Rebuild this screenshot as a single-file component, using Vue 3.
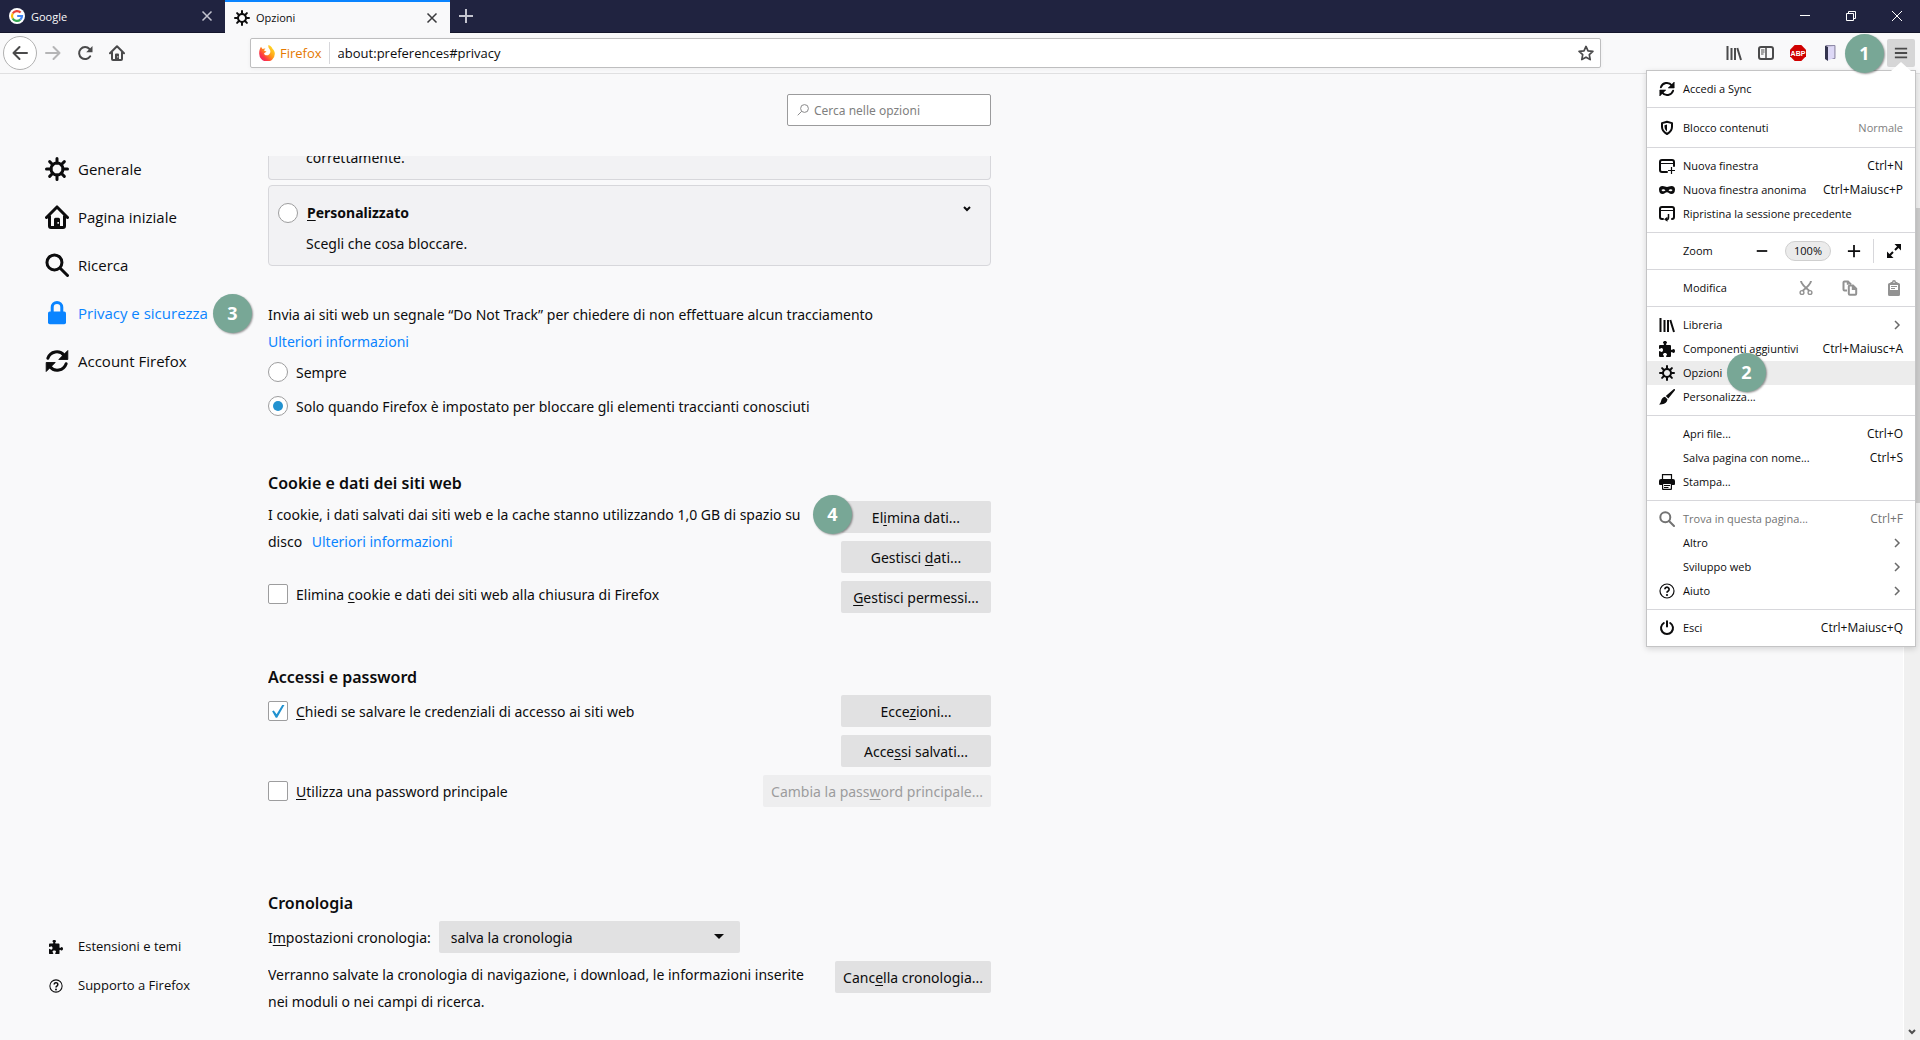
<script setup>
import { ref } from 'vue'

const tracking = ref('known')
const category = ref('')
const clearOnClose = ref(false)
const askSave = ref(true)
const mainPassword = ref(false)
const history = ref('save')
const search = ref('')
const address = ref('about:preferences#privacy')

const nav = [
  { icon: 'gear', label: 'Generale' },
  { icon: 'home', label: 'Pagina iniziale' },
  { icon: 'search', label: 'Ricerca' },
  { icon: 'lock', label: 'Privacy e sicurezza', active: true, step: 3 },
  { icon: 'sync', label: 'Account Firefox' },
]

const navFooter = [
  { icon: 'puzzle', label: 'Estensioni e temi' },
  { icon: 'help', label: 'Supporto a Firefox' },
]

const menu = [
  [{ icon: 'sync', label: 'Accedi a Sync' }],
  [{ icon: 'shield', label: 'Blocco contenuti', hint: 'Normale', tall: true }],
  [
    { icon: 'window-new', label: 'Nuova finestra', hint: 'Ctrl+N' },
    { icon: 'mask', label: 'Nuova finestra anonima', hint: 'Ctrl+Maiusc+P' },
    { icon: 'window-restore', label: 'Ripristina la sessione precedente' },
  ],
  [{ label: 'Zoom', kind: 'zoom' }],
  [{ label: 'Modifica', kind: 'edit' }],
  [
    { icon: 'library', label: 'Libreria', more: true },
    { icon: 'puzzle', label: 'Componenti aggiuntivi', hint: 'Ctrl+Maiusc+A' },
    { icon: 'gear', label: 'Opzioni', active: true, step: 2 },
    { icon: 'brush', label: 'Personalizza...' },
  ],
  [
    { label: 'Apri file...', hint: 'Ctrl+O' },
    { label: 'Salva pagina con nome...', hint: 'Ctrl+S' },
    { icon: 'print', label: 'Stampa...' },
  ],
  [
    { icon: 'search', label: 'Trova in questa pagina...', hint: 'Ctrl+F', disabled: true },
    { label: 'Altro', more: true },
    { label: 'Sviluppo web', more: true },
    { icon: 'help', label: 'Aiuto', more: true },
  ],
  [{ icon: 'power', label: 'Esci', hint: 'Ctrl+Maiusc+Q' }],
]
</script>

<template>
  <div class="browser">
    <svg class="sprite" aria-hidden="true">
      <symbol id="gear" viewBox="0 0 16 16">
        <circle cx="8" cy="8" r="4" fill="none" stroke="currentColor" stroke-width="2" />
        <path d="M8 4V1M8 12v3M4 8H1M12 8h3M5.2 5.2L3.1 3.1M10.8 10.8l2.1 2.1M5.2 10.8l-2.1 2.1M10.8 5.2l2.1-2.1" fill="none" stroke="currentColor" stroke-width="2" stroke-linecap="round" />
      </symbol>
      <symbol id="home" viewBox="0 0 16 16">
        <path d="M1 8.3L8 1.3l7 7M3 7.5V14a1 1 0 0 0 1 1h8a1 1 0 0 0 1-1V7.500" fill="none" stroke="currentColor" stroke-width="2" stroke-linecap="round" stroke-linejoin="round" />
        <path fill-rule="evenodd" d="M6 15V9.500a1 1 0 0 1 1-1h2a1 1 0 0 1 1 1V15zM8.300 11.300v1.200h1v-1.200z" fill="currentColor" />
      </symbol>
      <symbol id="search" viewBox="0 0 16 16">
        <circle cx="6.300" cy="6.300" r="5" fill="none" stroke="currentColor" stroke-width="2" />
        <path d="M10 10l5 5" stroke="currentColor" stroke-width="2" stroke-linecap="round" />
      </symbol>
      <symbol id="search-thin" viewBox="0 0 12 12">
        <circle cx="7.500" cy="4.500" r="3.900" fill="none" stroke="currentColor" />
        <path d="M4.700 7.300L.7 11.300" stroke="currentColor" />
      </symbol>
      <symbol id="lock" viewBox="0 0 16 16">
        <path d="M4.800 8V4.200a3.200 3.200 0 0 1 6.400 0V8" fill="none" stroke="currentColor" stroke-width="2" />
        <rect x="2" y="7" width="12" height="8.500" rx="1.200" fill="currentColor" />
      </symbol>
      <symbol id="sync" viewBox="0 0 16 16">
        <path d="M1.900 6.200A6.300 6.300 0 0 1 12.800 4.300M14.100 9.800A6.300 6.300 0 0 1 3.200 11.700" fill="none" stroke="currentColor" stroke-width="2" stroke-linecap="round" />
        <path d="M15.200 1v6H9.200zM.8 15V9h6z" fill="currentColor" stroke="currentColor" stroke-width=".6" stroke-linejoin="round" />
      </symbol>
      <symbol id="puzzle" viewBox="0 0 16 16">
        <path fill="currentColor" d="M14.500 8c-.971 0-1 1-1.750 1a.765.765 0 0 1-.75-.75V5a1 1 0 0 0-1-1H7.750A.765.765 0 0 1 7 3.250c0-.75 1-.779 1-1.750C8 .635 7.100 0 6 0S4 .635 4 1.500c0 .971 1 1 1 1.750a.765.765 0 0 1-.75.75H1a1 1 0 0 0-1 1v2.250A.765.765 0 0 0 .75 8c.75 0 .779-1 1.750-1C3.365 7 4 7.900 4 9s-.635 2-1.500 2c-.971 0-1-1-1.750-1a.765.765 0 0 0-.75.75V15a1 1 0 0 0 1 1h3.250a.765.765 0 0 0 .75-.75c0-.75-1-.779-1-1.750 0-.865.9-1.500 2-1.500s2 .635 2 1.500c0 .971-1 1-1 1.750a.765.765 0 0 0 .75.75H11a1 1 0 0 0 1-1v-3.250a.765.765 0 0 1 .75-.75c.75 0 .779 1 1.750 1 .865 0 1.500-.9 1.500-2s-.635-2-1.500-2z" />
      </symbol>
      <symbol id="help" viewBox="0 0 16 16">
        <circle cx="8" cy="8" r="7" fill="none" stroke="currentColor" stroke-width="1.200" />
        <path d="M5.900 6.300a2.100 2.100 0 1 1 3.300 1.700Q8 8.700 8 9.800" fill="none" stroke="currentColor" stroke-width="1.700" />
        <circle cx="8" cy="12" r="1.100" fill="currentColor" />
      </symbol>
      <symbol id="shield" viewBox="0 0 16 16">
        <path d="M8 1.800l5 1.300v3.700c0 3-2 5.700-5 7.200-3-1.500-5-4.200-5-7.200V3.100z" fill="none" stroke="currentColor" stroke-width="2" stroke-linejoin="round" />
        <path d="M8 4.500v7c-1.400-1.100-2.500-2.700-2.500-4.700V5.200z" fill="currentColor" />
      </symbol>
      <symbol id="window-new" viewBox="0 0 16 16">
        <path d="M8 14H3a2 2 0 0 1-2-2V4a2 2 0 0 1 2-2h10a2 2 0 0 1 2 2v4" fill="none" stroke="currentColor" stroke-width="2" stroke-linecap="round" />
        <path d="M1 5.500h14" stroke="currentColor" stroke-width="1" />
        <path d="M12.500 9v7M9 12.500h7" stroke="currentColor" stroke-width="1.200" />
      </symbol>
      <symbol id="window-restore" viewBox="0 0 16 16">
        <path d="M4 13H3a2 2 0 0 1-2-2V3a2 2 0 0 1 2-2h10a2 2 0 0 1 2 2v8a2 2 0 0 1-2 2" fill="none" stroke="currentColor" stroke-width="2" stroke-linecap="round" />
        <path d="M1 4.500h14" stroke="currentColor" stroke-width="1" />
        <path d="M9.500 8v4c0 1-.5 1.500-1.500 1.500H6.500" fill="none" stroke="currentColor" stroke-width="1.500" />
        <path d="M8.500 10.800v5l-3.500-2.500z" fill="currentColor" />
      </symbol>
      <symbol id="mask" viewBox="0 0 16 16">
        <path fill-rule="evenodd" fill="currentColor" d="M3.500 4C1.200 4 0 5.200 0 7.500 0 10.500 1.500 12 3.500 12c2.300 0 3-1.700 4.500-1.700S10.200 12 12.500 12c2 0 3.500-1.500 3.500-4.500C16 5.200 14.800 4 12.500 4 10.300 4 9.500 5 8 5S5.700 4 3.500 4zM2.500 8C3 6.800 5.500 6.800 6.500 8.300 5.500 9.600 3 9.600 2.500 8zM13.500 8C13 6.800 10.500 6.800 9.500 8.300c1 1.300 3.500 1.300 4-.3z" />
      </symbol>
      <symbol id="library" viewBox="0 0 16 16">
        <path d="M1.500 1v14M5.500 3v12M9 3v12M11.300 3l3.700 12" fill="none" stroke="currentColor" stroke-width="2" />
      </symbol>
      <symbol id="brush" viewBox="0 0 16 16">
        <path d="M15.800.2c.3.300.3.700 0 1.200L9.300 9.500 6.800 7l7.800-6.700c.4-.3.900-.4 1.200-.1zM6 7.700L8.500 10.200c-.2 3-2.500 4.600-5.500 5-1 .2-2 .3-3 .3 1.200-.8 1.600-1.700 2-3.200C2.500 9.800 3.800 7.900 6 7.700z" fill="currentColor" />
      </symbol>
      <symbol id="print" viewBox="0 0 16 16">
        <path d="M3.500 6V.6h9V6" fill="none" stroke="currentColor" stroke-width="1.200" />
        <path d="M2 5h12a2 2 0 0 1 2 2v3a1 1 0 0 1-1 1h-2v4a1 1 0 0 1-1 1H4a1 1 0 0 1-1-1v-4H1a1 1 0 0 1-1-1V7a2 2 0 0 1 2-2zm2.200 5v4.800h7.600V10z" fill="currentColor" fill-rule="evenodd" />
        <path d="M5 11.500h6M5 13.500h4.500" stroke="currentColor" stroke-width="1" />
      </symbol>
      <symbol id="power" viewBox="0 0 16 16">
        <path d="M4.800 3A6 6 0 1 0 11.200 3M8 1.200v5.300" fill="none" stroke="currentColor" stroke-width="2" stroke-linecap="round" />
      </symbol>
      <symbol id="chevron" viewBox="0 0 8 10">
        <path d="M2 1l4 4-4 4" fill="none" stroke="currentColor" stroke-width="1.500" />
      </symbol>
      <symbol id="cut" viewBox="0 0 16 16">
        <path d="M3 1c.3 3 3 5.500 8.500 10M13 1c-.3 3-3 5.500-8.500 10" fill="none" stroke="currentColor" stroke-width="2" />
        <circle cx="4" cy="12.500" r="1.900" fill="none" stroke="currentColor" stroke-width="1.400" />
        <circle cx="12" cy="12.500" r="1.900" fill="none" stroke="currentColor" stroke-width="1.400" />
      </symbol>
      <symbol id="copy" viewBox="0 0 16 16">
        <path d="M5 10.500H2.500a1 1 0 0 1-1-1v-7a1 1 0 0 1 1-1H6L9 4.500" fill="none" stroke="currentColor" stroke-width="2" />
        <path d="M6.800 6.500a1 1 0 0 1 1-1H11l3.200 3.200v5a1 1 0 0 1-1 1H7.800a1 1 0 0 1-1-1zM10.800 5.500V9h3.400M5.800 1.500v3.300" fill="none" stroke="currentColor" stroke-width="2" />
      </symbol>
      <symbol id="paste" viewBox="0 0 16 16">
        <path fill="currentColor" fill-rule="evenodd" d="M5 2h1a2 2 0 0 1 4 0h1l1 1h.5A1.500 1.500 0 0 1 14 4.500v10a1.500 1.500 0 0 1-1.500 1.500h-9A1.500 1.500 0 0 1 2 14.500v-10A1.500 1.500 0 0 1 3.500 3H4zm-1 3v5h8V5zM7.300 1.800v1h1.400v-1z" />
        <path d="M5 6.500h6M5 8.500h4" stroke="currentColor" />
      </symbol>
      <symbol id="fullscreen" viewBox="0 0 16 16">
        <path d="M9 7l5-5M7 9l-5 5" stroke="currentColor" stroke-width="2" />
        <path d="M8.500 1H15v6.500zM1 8.500V15h6.500z" fill="currentColor" />
      </symbol>
      <symbol id="plus" viewBox="0 0 16 16">
        <path d="M8 1v14M1 8h14" stroke="currentColor" stroke-width="2" />
      </symbol>
      <symbol id="minus" viewBox="0 0 16 16">
        <path d="M2 8h12" stroke="currentColor" stroke-width="2" />
      </symbol>
      <symbol id="close" viewBox="0 0 16 16">
        <path d="M3.500 3.500l9 9M12.500 3.500l-9 9" stroke="currentColor" stroke-width="1.500" />
      </symbol>
      <symbol id="arrow" viewBox="0 0 16 16">
        <path d="M15 8H1.500M7.500 2l-6 6 6 6" fill="none" stroke="currentColor" stroke-width="2" stroke-linecap="round" stroke-linejoin="round" />
      </symbol>
      <symbol id="reload" viewBox="0 0 16 16">
        <path d="M13.200 11.300A6 6 0 1 1 12.500 4" fill="none" stroke="currentColor" stroke-width="2" stroke-linecap="round" />
        <path d="M15.500 1v6.300H9.200z" fill="currentColor" />
      </symbol>
      <symbol id="star" viewBox="0 0 16 16">
        <path d="M8 1.400l2 4.400 4.900.6-3.600 3.300.9 4.900L8 12.200l-4.200 2.400.9-4.900L1.100 6.400 6 5.800z" fill="none" stroke="currentColor" stroke-width="1.700" stroke-linejoin="round" />
      </symbol>
      <symbol id="sidebar" viewBox="0 0 16 16">
        <rect x="1" y="2" width="14" height="12" rx="2" fill="none" stroke="currentColor" stroke-width="2" />
        <path d="M8 2v12" stroke="currentColor" stroke-width="1.500" />
        <path d="M3 5h3.500M3 7h3.500M3 9h2.500" stroke="currentColor" />
      </symbol>
      <symbol id="lines" viewBox="0 0 16 16">
        <path d="M1 3h14M1 8h14M1 13h14" stroke="currentColor" stroke-width="2.200" />
      </symbol>
      <symbol id="down" viewBox="0 0 8 6">
        <path d="M1 1l3 3 3-3" fill="none" stroke="currentColor" stroke-width="2" />
      </symbol>
    </svg>

    <header class="tabs">
      <div class="tab">
        <svg class="i16" viewBox="0 0 16 16" aria-hidden="true">
          <circle cx="8" cy="8" r="8" fill="#fff" />
          <g fill="none" stroke-width="2.200">
            <path d="M11.600 4.600A5 5 0 0 0 3.700 5.500" stroke="#ea4335" />
            <path d="M3.700 5.500a5 5 0 0 0 0 5" stroke="#fbbc05" />
            <path d="M3.700 10.500a5 5 0 0 0 7.600 1.200" stroke="#34a853" />
            <path d="M11.300 11.700A5 5 0 0 0 13 8H8.200" stroke="#4285f4" />
          </g>
        </svg>
        <span class="tab-title">Google</span>
        <button class="bare" aria-label="Chiudi scheda Google"><svg class="i16"><use href="#close" /></svg></button>
      </div>
      <div class="tab current">
        <svg class="i16"><use href="#gear" /></svg>
        <span class="tab-title">Opzioni</span>
        <button class="bare" aria-label="Chiudi scheda Opzioni"><svg class="i16"><use href="#close" /></svg></button>
      </div>
      <button class="bare new-tab" aria-label="Nuova scheda"><svg class="i16"><use href="#plus" /></svg></button>
      <div class="window-controls">
        <button class="bare" aria-label="Riduci a icona"><svg class="i10" viewBox="0 0 10 10"><path d="M0 4.500h10" stroke="currentColor" /></svg></button>
        <button class="bare" aria-label="Ripristina"><svg class="i10" viewBox="0 0 10 10"><path d="M.5 2.500h7v7h-7zM2.500 2.500v-2h7v7h-2" fill="none" stroke="currentColor" /></svg></button>
        <button class="bare" aria-label="Chiudi"><svg class="i10" viewBox="0 0 10 10"><path d="M0 0l10 10M10 0L0 10" stroke="currentColor" /></svg></button>
      </div>
    </header>

    <div class="toolbar">
      <div class="nav-buttons">
        <button class="bare back" aria-label="Indietro"><svg class="i16"><use href="#arrow" /></svg></button>
        <button class="bare tool forward" aria-label="Avanti"><svg class="i16"><use href="#arrow" /></svg></button>
        <button class="bare tool" aria-label="Ricarica"><svg class="i16"><use href="#reload" /></svg></button>
        <button class="bare tool" aria-label="Pagina iniziale"><svg class="i16"><use href="#home" /></svg></button>
      </div>
      <div class="address">
        <svg class="i16" viewBox="0 0 16 16" aria-hidden="true">
          <defs>
            <linearGradient id="flame" x1="1" y1="0" x2="0" y2="1">
              <stop offset="0.100" stop-color="#ffe226" />
              <stop offset="0.450" stop-color="#ff9a1a" />
              <stop offset="0.700" stop-color="#ff3b3f" />
              <stop offset="1" stop-color="#e0108a" />
            </linearGradient>
          </defs>
          <path d="M9.500 0c2.500 1 3.500 2.500 4 3.700C15 5 16 7 15.800 9a7.800 7.800 0 0 1-15.600-.5C.1 5.500 1 3.500 2 1.800L3.500 4c1-.6 2-.7 3-.5C5.500 4.300 5 5 5.300 5.800L7.500 6.500C7 7.500 5.500 7.500 5 8.500c.5 2 3.500 2.500 5 1 1.800-1.500 1.800-4 .5-5.500C9.500 3 9 1.500 9.500 0z" fill="url(#flame)" />
        </svg>
        <span class="identity">Firefox</span>
        <input v-model="address" class="url" type="text" aria-label="Indirizzo" />
        <button class="bare star" aria-label="Aggiungi ai segnalibri"><svg class="i16"><use href="#star" /></svg></button>
      </div>
      <div class="tools">
        <button class="bare tool" aria-label="Libreria"><svg class="i16"><use href="#library" /></svg></button>
        <button class="bare tool" aria-label="Barre laterali"><svg class="i16"><use href="#sidebar" /></svg></button>
        <button class="bare tool" aria-label="Adblock Plus">
          <svg class="i16" viewBox="0 0 16 16">
            <path d="M4.700 0h6.600L16 4.700v6.600L11.300 16H4.700L0 11.300V4.700z" fill="#d00000" />
            <text x="8" y="10.500" text-anchor="middle" class="abp">ABP</text>
          </svg>
        </button>
        <button class="bare tool" aria-label="Estensione">
          <svg class="i16" viewBox="0 0 16 16">
            <path d="M4 .5h9v13H8" fill="#c9c4dc" stroke="#8f8aa8" />
            <path d="M3 .5l3 1.500v14l-3-2z" fill="#34354f" />
            <path d="M6 2.500L12 1v12l-6 2.500z" fill="#ddd8f6" />
          </svg>
        </button>
        <span class="step step-menu">1</span>
        <button class="bare menu-button" aria-label="Apri menu"><svg class="i14"><use href="#lines" /></svg></button>
      </div>

      <div class="menu" role="menu">
        <svg class="pointer" viewBox="0 0 20 10"><path d="M0 10L10 1l10 9" /></svg>
        <div v-for="(group, g) in menu" :key="g" class="group">
          <template v-for="item in group" :key="item.label">
            <div v-if="item.kind" class="item">
              <span class="item-label">{{ item.label }}</span>
              <template v-if="item.kind === 'zoom'">
                <button class="bare zoom-button" aria-label="Riduci"><svg class="i14"><use href="#minus" /></svg></button>
                <button class="bare zoom-level">100%</button>
                <button class="bare zoom-button" aria-label="Ingrandisci"><svg class="i14"><use href="#plus" /></svg></button>
                <button class="bare full" aria-label="Schermo intero"><svg class="i16"><use href="#fullscreen" /></svg></button>
              </template>
              <template v-else>
                <button v-for="e in ['cut', 'copy', 'paste']" :key="e" class="bare edit" :aria-label="e" disabled>
                  <svg class="i16"><use :href="'#' + e" /></svg>
                </button>
              </template>
            </div>
            <button v-else class="bare item" :class="{ active: item.active, tall: item.tall }" :disabled="item.disabled" role="menuitem">
              <svg v-if="item.icon" class="i16 item-icon"><use :href="'#' + item.icon" /></svg>
              <span class="item-label">{{ item.label }}<span v-if="item.step" class="step step-item">{{ item.step }}</span></span>
              <span v-if="item.hint" class="hint" :class="{ dim: item.tall }">{{ item.hint }}</span>
              <svg v-if="item.more" class="more"><use href="#chevron" /></svg>
            </button>
          </template>
        </div>
      </div>
    </div>

    <div class="page">
      <nav class="sidebar">
        <a v-for="n in nav" :key="n.label" href="#" class="nav-item" :class="{ selected: n.active }">
          <svg class="i24"><use :href="'#' + n.icon" /></svg>
          <span class="nav-label">{{ n.label }}<span v-if="n.step" class="step step-nav">{{ n.step }}</span></span>
        </a>
        <div class="nav-footer">
          <a v-for="n in navFooter" :key="n.label" href="#" class="nav-small">
            <svg class="i14"><use :href="'#' + n.icon" /></svg>{{ n.label }}
          </a>
        </div>
      </nav>

      <main class="content">
        <div class="search-row">
          <label class="search-box">
            <svg class="i12"><use href="#search-thin" /></svg>
            <input v-model="search" type="text" placeholder="Cerca nelle opzioni" aria-label="Cerca nelle opzioni" />
          </label>
        </div>

        <div class="scroll">
          <div class="card clipped"><p class="card-text">correttamente.</p></div>
          <div class="card">
            <label class="card-head">
              <input v-model="category" type="radio" name="category" value="custom" />
              <b><u>P</u>ersonalizzato</b>
              <svg class="down"><use href="#down" /></svg>
            </label>
            <p class="card-text">Scegli che cosa bloccare.</p>
          </div>

          <section class="tracking">
            <p>Invia ai siti web un segnale “Do Not Track” per chiedere di non effettuare alcun tracciamento</p>
            <p><a href="#">Ulteriori informazioni</a></p>
            <label class="option"><input v-model="tracking" type="radio" name="dnt" value="always" />Sempre</label>
            <label class="option"><input v-model="tracking" type="radio" name="dnt" value="known" />Solo quando Firefox è impostato per bloccare gli elementi traccianti conosciuti</label>
          </section>

          <section class="cookies">
            <h2>Cookie e dati dei siti web</h2>
            <div class="columns">
              <div class="text">
                <p>I cookie, i dati salvati dai siti web e la cache stanno utilizzando 1,0 GB di spazio su disco <a class="spaced" href="#">Ulteriori informazioni</a></p>
                <label class="option after-text"><input v-model="clearOnClose" type="checkbox" /><span>Elimina <u>c</u>ookie e dati dei siti web alla chiusura di Firefox</span></label>
              </div>
              <div class="buttons">
                <button class="push">El<u>i</u>mina dati...</button>
                <button class="push">Gestisci <u>d</u>ati...</button>
                <button class="push"><u>G</u>estisci permessi...</button>
                <span class="step step-clear">4</span>
              </div>
            </div>
          </section>

          <section class="logins">
            <h2>Accessi e password</h2>
            <div class="stack">
              <div class="line">
                <label class="option"><input v-model="askSave" type="checkbox" /><span><u>C</u>hiedi se salvare le credenziali di accesso ai siti web</span></label>
                <button class="push">Ecce<u>z</u>ioni...</button>
              </div>
              <div class="line end"><button class="push">Acce<u>s</u>si salvati...</button></div>
              <div class="line">
                <label class="option"><input v-model="mainPassword" type="checkbox" /><span><u>U</u>tilizza una password principale</span></label>
                <button class="push" disabled>Cambia la pass<u>w</u>ord principale...</button>
              </div>
            </div>
          </section>

          <section class="history">
            <h2>Cronologia</h2>
            <div class="stack">
              <div class="setting">
                <label for="history-mode">I<u>m</u>postazioni cronologia:</label>
                <span class="select">
                  <select id="history-mode" v-model="history">
                    <option value="save">salva la cronologia</option>
                    <option value="never">non salvare la cronologia</option>
                    <option value="custom">utilizza impostazioni personalizzate</option>
                  </select>
                  <svg viewBox="0 0 10 6"><path d="M0 0h10L5 5z" fill="currentColor" /></svg>
                </span>
              </div>
              <div class="columns">
                <p class="text">Verranno salvate la cronologia di navigazione, i download, le informazioni inserite nei moduli o nei campi di ricerca.</p>
                <button class="push">Canc<u>e</u>lla cronologia...</button>
              </div>
            </div>
          </section>
        </div>
      </main>

      <div class="scrollbar" aria-hidden="true">
        <div class="thumb"></div>
        <svg class="down"><use href="#down" /></svg>
      </div>
    </div>
  </div>
</template>

<style>
body {
  margin: 0;
}
</style>

<style scoped>
* {
  box-sizing: border-box;
}
.browser {
  display: flex;
  flex-direction: column;
  height: 100vh;
  overflow: hidden;
  background: #f9f9fa;
  color: #0c0c0d;
  font: 14px/27px "Open Sans", "Noto Sans", sans-serif;
}
.sprite {
  position: absolute;
  width: 0;
  height: 0;
}
svg {
  display: block;
  flex: none;
}
.i10 { width: 10px; height: 10px; }
.i12 { width: 12px; height: 12px; }
.i14 { width: 14px; height: 14px; }
.i16 { width: 16px; height: 16px; }
.i24 { width: 24px; height: 24px; }
p,
h2 {
  margin: 0;
}
a {
  color: #0a84ff;
  text-decoration: none;
}
u {
  text-underline-offset: 2px;
}
.bare {
  display: flex;
  align-items: center;
  justify-content: center;
  padding: 0;
  border: 0;
  background: none;
  color: inherit;
  font: inherit;
}

/* Tab strip */
.tabs {
  display: flex;
  height: 33px;
  flex: none;
  background: #202340;
  border-bottom: 1px solid #14162c;
  color: #c3c4cf;
  font-size: 11px;
}
.tab {
  display: flex;
  align-items: center;
  width: 225px;
  padding: 0 10px 0 9px;
}
.tab-title {
  flex: 1;
  padding-left: 6px;
  color: #f9f9fa;
}
.tab.current {
  height: 33px;
  background: #f9f9fa;
  border-top: 2px solid #0a84ff;
  color: #3a3a3c;
}
.tab.current > .i16,
.current .tab-title {
  color: #0c0c0d;
}
.new-tab {
  width: 32px;
}
.window-controls {
  display: flex;
  margin-left: auto;
  color: #fff;
}
.window-controls .bare {
  width: 46px;
}

/* Toolbar */
.toolbar {
  position: relative;
  z-index: 2;
  display: flex;
  align-items: center;
  height: 41px;
  flex: none;
  padding: 0 5px 0 3px;
  border-bottom: 1px solid #e0e0e1;
  color: #4a4a4b;
}
.nav-buttons,
.tools {
  display: flex;
  align-items: center;
}
.nav-buttons {
  margin-right: 117px;
}
.back {
  width: 34px;
  height: 34px;
  border: 1px solid #b1b1b1;
  border-radius: 50%;
  background: #fff;
}
.tool {
  width: 32px;
  height: 32px;
}
.forward {
  color: #b5b5b6;
}
.forward svg {
  transform: scaleX(-1);
}
.address {
  display: flex;
  flex: 1;
  align-items: center;
  height: 30px;
  padding: 0 6px 0 8px;
  border: 1px solid #bebebf;
  border-radius: 2px;
  background: #fff;
  box-shadow: 0 1px 4px rgba(0, 0, 0, 0.050);
  font-size: 13px;
}
.identity {
  height: 22px;
  padding: 0 7px 0 5px;
  border-right: 1px solid #d7d7db;
  color: #e57900;
  font-size: 13px;
  line-height: 22px;
}
.url {
  flex: 1;
  min-width: 0;
  padding: 0 0 0 8px;
  border: 0;
  outline: 0;
  background: none;
  color: #0c0c0d;
  font: inherit;
}
.tools {
  margin-left: 117px;
  position: relative;
}
.abp {
  fill: #fff;
  font: bold 7px "Liberation Sans", sans-serif;
}
.menu-button {
  width: 28px;
  height: 28px;
  margin-left: 41px;
  border-radius: 2px;
  background: #d6d6d7;
}

/* Numbered callouts */
.step {
  position: absolute;
  z-index: 3;
  width: 39px;
  height: 39px;
  border-radius: 50%;
  background: #78a796;
  box-shadow: 1px 1px 2px rgba(0, 0, 0, 0.400);
  color: #fff;
  font: bold 18px/38px "Open Sans", sans-serif;
  text-align: center;
}
.step-menu {
  right: 31px;
}
.step-item {
  top: -8px;
  left: 80px;
}
.step-nav {
  top: -6px;
  left: 135px;
}
.step-clear {
  top: -6px;
  left: -28px;
}

/* Application menu */
.menu {
  position: absolute;
  top: 37px;
  right: 4px;
  width: 270px;
  border: 1px solid #c4c4c5;
  background: #fff;
  box-shadow: 0 2px 6px rgba(0, 0, 0, 0.150);
  color: #0c0c0d;
  font-size: 11px;
  line-height: 24px;
}
.pointer {
  position: absolute;
  top: -10px;
  right: 4px;
  width: 20px;
  height: 10px;
  fill: #fff;
}
.group {
  padding: 6px 0;
}
.group + .group {
  border-top: 1px solid #d7d7db;
}
.item {
  position: relative;
  display: flex;
  align-items: center;
  justify-content: flex-start;
  width: 100%;
  height: 24px;
  padding: 0 12px 0 36px;
}
.item.tall {
  height: 27px;
}
.item.active {
  background: #ececec;
}
.item:disabled {
  color: #737373;
}
.item-icon {
  margin: 0 8px 0 -24px;
}
.item-label {
  flex: 1;
  text-align: left;
  white-space: nowrap;
}
.hint {
  font-size: 12px;
}
.dim {
  color: #808080;
  font-size: 11px;
}
.more {
  width: 8px;
  height: 10px;
  margin-right: 2px;
  color: #6a6a6a;
}
.zoom-button {
  width: 34px;
}
.zoom-level {
  width: 46px;
  height: 20px;
  margin: 0 6px;
  border: 1px solid #cfcfcf;
  border-radius: 10px;
  background: #ebebeb;
}
.full {
  width: 32px;
  height: 24px;
  margin-right: -2px;
  margin-left: 2px;
  padding-left: 8px;
  border-left: 1px solid #d7d7db;
}
.edit {
  width: 16px;
  margin-left: 28px;
  color: #929292;
}
.edit:last-child {
  margin-right: 1px;
}

/* Preferences page */
.page {
  display: flex;
  flex: 1;
  min-height: 0;
}
.sidebar {
  display: flex;
  flex-direction: column;
  width: 268px;
  flex: none;
  padding: 71px 0 35px 45px;
}
.nav-item {
  display: flex;
  align-items: center;
  gap: 9px;
  height: 48px;
  color: inherit;
  font-size: 15px;
}
.nav-label {
  position: relative;
}
.selected {
  color: #0a84ff;
}
.nav-footer {
  margin-top: auto;
}
.nav-small {
  display: flex;
  align-items: center;
  gap: 15px;
  height: 39px;
  padding-left: 4px;
  color: inherit;
  font-size: 13px;
}
.content {
  display: flex;
  flex-direction: column;
  flex: 0 1 723px;
  min-width: 0;
  font-family: "Noto Sans", "Open Sans", sans-serif;
}
.search-row {
  display: flex;
  justify-content: flex-end;
  padding: 20px 0 30px;
}
.search-box {
  display: flex;
  align-items: center;
  gap: 5px;
  width: 204px;
  height: 32px;
  padding: 0 9px;
  border: 1px solid #9b9b9c;
  border-radius: 2px;
  background: #fff;
  color: #8a8a8b;
}
.search-box input {
  flex: 1;
  min-width: 0;
  padding: 0;
  border: 0;
  outline: 0;
  font: inherit;
  font-size: 12px;
}
.search-box input::placeholder {
  color: #7f7f80;
}
.scroll {
  flex: 1;
  min-height: 0;
  overflow: hidden;
}
.card {
  padding: 9px 9px 8px;
  border: 1px solid #d7d7db;
  border-radius: 4px;
  background: #f2f2f4;
}
.card.clipped {
  display: flex;
  flex-direction: column;
  justify-content: flex-end;
  height: 24px;
  margin-bottom: 5px;
  padding-top: 0;
  border-top: 0;
  border-radius: 0 0 4px 4px;
  overflow: hidden;
}
.card-head {
  display: flex;
  align-items: center;
  gap: 9px;
  height: 35px;
}
.card-text {
  padding-left: 28px;
}
.down {
  width: 8px;
  height: 6px;
}
.card-head .down {
  align-self: flex-start;
  margin: 11px 10px 0 auto;
}
input[type="radio"],
input[type="checkbox"] {
  display: grid;
  place-content: center;
  width: 20px;
  height: 20px;
  flex: none;
  margin: 0;
  appearance: none;
  border: 1px solid #9d9d9e;
  border-radius: 2px;
  background: #fff;
}
input[type="radio"] {
  border-radius: 50%;
}
input[type="radio"]:checked::before {
  content: "";
  width: 10px;
  height: 10px;
  border-radius: 50%;
  background: #2292d0;
}
input[type="checkbox"]:checked::before {
  content: "";
  width: 14px;
  height: 14px;
  background: #2292d0;
  clip-path: polygon(8% 52%, 20% 46%, 40% 74%, 80% 8%, 96% 8%, 44% 98%, 34% 98%);
}
.option {
  display: flex;
  align-items: center;
  gap: 8px;
  height: 34px;
}
.tracking {
  margin-top: 35px;
}
.cookies {
  margin-top: 47px;
}
.logins {
  margin-top: 51px;
}
.history {
  margin-top: 83px;
}
h2 {
  margin-bottom: 5px;
  font-size: 16px;
  font-weight: 600;
  line-height: 26px;
}
.columns {
  display: flex;
  gap: 16px;
  align-items: flex-start;
}
.text {
  flex: 1;
  min-width: 0;
}
.spaced {
  margin-left: 6px;
}
.after-text {
  margin-top: 22px;
}
.buttons,
.stack {
  position: relative;
  display: flex;
  flex-direction: column;
  gap: 8px;
}
.push {
  min-width: 150px;
  height: 32px;
  padding: 0 8px;
  border: 0;
  border-radius: 2px;
  background: #e1e1e2;
  color: #0c0c0d;
  font: inherit;
}
.push:disabled {
  background: #eeeeef;
  color: #9c9c9d;
}
.line {
  display: flex;
  align-items: center;
  justify-content: space-between;
  height: 32px;
}
.line.end {
  justify-content: flex-end;
}
.setting {
  display: flex;
  align-items: center;
  gap: 8px;
}
.select {
  display: grid;
  align-items: center;
  width: 301px;
  height: 32px;
}
.select > * {
  grid-area: 1 / 1;
}
.select select {
  height: 32px;
  padding: 0 12px;
  appearance: none;
  border: 0;
  border-radius: 2px;
  background: #e1e1e2;
  color: inherit;
  font: inherit;
}
.select svg {
  justify-self: end;
  width: 10px;
  height: 6px;
  margin-right: 16px;
  pointer-events: none;
}

/* Scrollbar */
.scrollbar {
  display: flex;
  flex-direction: column;
  align-items: center;
  justify-content: space-between;
  width: 17px;
  margin-left: auto;
  padding: 134px 0 5px;
  border-left: 1px solid #fff;
  background: #f0f0f0;
  color: #505050;
}
.thumb {
  width: 100%;
  height: 295px;
  background: #cdcdcd;
}
</style>
